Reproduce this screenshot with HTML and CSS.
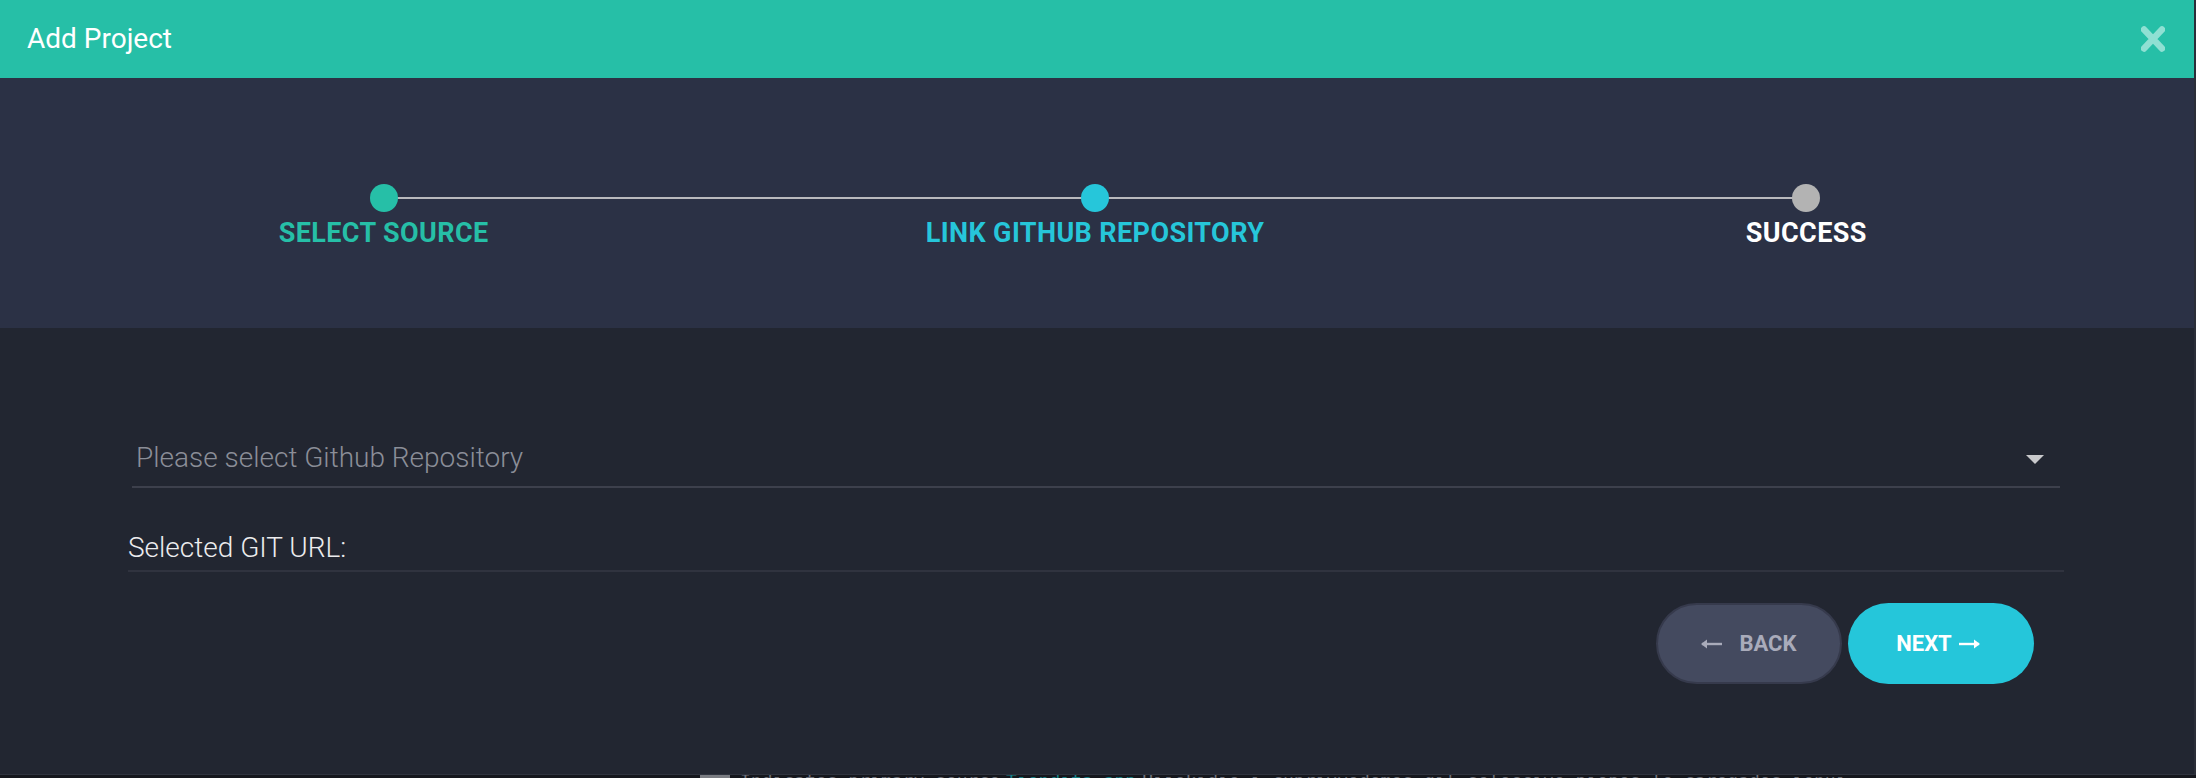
FILE: index.html
```html
<!DOCTYPE html>
<html lang="en">
<head>
<meta charset="utf-8">
<title>Add Project</title>
<link rel="stylesheet" href="styles.css">
</head>
<body>
<div class="modal">
  <header class="modal-header">
    <h1 class="modal-title">Add Project</h1>
    <button class="close-btn" aria-label="Close">
      <svg width="24" height="26" viewBox="0 0 24 26"><path d="M3 3.5 L21 22.5 M21 3.5 L3 22.5" stroke="#8fe0d3" stroke-width="6.5" stroke-linecap="round"/></svg>
    </button>
  </header>

  <section class="stepper">
    <div class="step step-done">
      <span class="step-dot"></span>
      <span class="step-label">SELECT SOURCE</span>
    </div>
    <div class="step step-active">
      <span class="step-dot"></span>
      <span class="step-label">LINK GITHUB REPOSITORY</span>
    </div>
    <div class="step step-todo">
      <span class="step-dot"></span>
      <span class="step-label">SUCCESS</span>
    </div>
  </section>

  <section class="modal-body">
    <div class="select-field">
      <span class="select-placeholder">Please select Github Repository</span>
      <span class="select-caret"></span>
    </div>
    <div class="url-field">Selected GIT URL:</div>
    <div class="actions">
      <button class="btn btn-back">
        <svg width="21" height="10" viewBox="0 0 21 10"><path d="M1 5 H21" stroke="#a9abba" stroke-width="2.4"/><path d="M0 5 L6 0.5 L6 9.5 Z" fill="#a9abba"/></svg>
        <span>BACK</span>
      </button>
      <button class="btn btn-next">
        <span>NEXT</span>
        <svg width="21" height="10" viewBox="0 0 21 10"><path d="M0 5 H20" stroke="#ffffff" stroke-width="2.4"/><path d="M21 5 L15 0.5 L15 9.5 Z" fill="#ffffff"/></svg>
      </button>
    </div>
  </section>
</div>
<div class="page-behind">
  <span class="pb-block"></span>
  <span class="pb-text">Indicates primary source</span>
  <span class="pb-teal">Tiendita-app</span>
  <span class="pb-text">Hijokidie i cuprivvodemos gil seleccive piopos le caregados ienui</span>
</div>
</body>
</html>
```

FILE: styles.css
```css
* {
  box-sizing: border-box;
}

html, body {
  margin: 0;
  padding: 0;
}

body {
  width: 2196px;
  height: 778px;
  overflow: hidden;
  background: #15171d;
  font-family: Roboto, "Noto Sans", "Liberation Sans", sans-serif;
}

.modal {
  width: 2196px;
  height: 775px;
  border-right: 2px solid #2b2e38;
  border-bottom: 1px solid #2f333e;
  display: flex;
  flex-direction: column;
  background: #222631;
}

.modal-header {
  height: 78px;
  flex: none;
  background: #26bfa7;
  display: flex;
  align-items: center;
  justify-content: space-between;
  padding: 0 29px 0 27px;
}

.modal-title {
  margin: 0;
  color: #ffffff;
  font-size: 28px;
  font-weight: 400;
  line-height: 1;
}

.close-btn {
  background: none;
  border: 0;
  padding: 0;
  width: 24px;
  height: 26px;
  display: flex;
  margin-top: 0;
}

/* stepper */
.stepper {
  height: 250px;
  flex: none;
  background: #2b3145;
  display: flex;
  padding: 106px 32px 0 28px;
}

.step {
  flex: 1;
  display: flex;
  flex-direction: column;
  align-items: center;
  position: relative;
}

.step + .step::before {
  content: "";
  position: absolute;
  top: 13px;
  left: -50%;
  right: 50%;
  height: 2px;
  background: #b9b9bd;
}

.step-dot {
  width: 28px;
  height: 28px;
  border-radius: 50%;
  position: relative;
  z-index: 1;
}

.step-label {
  margin-top: 6px;
  font-size: 27px;
  line-height: 30px;
  font-weight: 700;
  letter-spacing: 0.4px;
}

.step-done .step-dot { background: #26bfa7; }
.step-done .step-label { color: #26bfa7; }
.step-active .step-dot { background: #26c6da; }
.step-active .step-label { color: #26c6da; }
.step-todo .step-dot { background: #b3b3b3; }
.step-todo .step-label { color: #ffffff; }

/* body */
.modal-body {
  flex: 1;
  padding: 110px 130px 0 128px;
  display: flex;
  flex-direction: column;
}

.select-field {
  margin: 0 4px;
  display: flex;
  align-items: center;
  justify-content: space-between;
  padding: 0 16px 8px 4px;
  border-bottom: 2px solid #3d404c;
}

.select-placeholder {
  font-size: 28px;
  font-weight: 300;
  line-height: 40px;
  color: #8b8e98;
}

.select-caret {
  width: 0;
  height: 0;
  border-left: 9px solid transparent;
  border-right: 9px solid transparent;
  border-top: 9.5px solid #c9c9cc;
  margin-top: 3px;
}

.url-field {
  margin-top: 40px;
  font-size: 28px;
  font-weight: 300;
  line-height: 40px;
  color: #ececee;
  padding-bottom: 2px;
  border-bottom: 2px solid #30333f;
}

.actions {
  display: flex;
  justify-content: flex-end;
  gap: 6px;
  margin-top: 31px;
  padding-right: 30px;
}

.btn {
  height: 81px;
  width: 186px;
  border-radius: 41px;
  display: flex;
  align-items: center;
  justify-content: center;
  font-family: Roboto, "Noto Sans", "Liberation Sans", sans-serif;
  font-size: 22px;
  font-weight: 700;
  cursor: pointer;
}

.btn-back {
  width: 186px;
  background: #444a5f;
  border: 2px solid #363a4c;
  color: #a9abba;
  gap: 17px;
}

.btn-next {
  background: #25c6da;
  border: 0;
  color: #ffffff;
  gap: 7px;
  padding-right: 12px;
}

/* page visible behind the modal */
.page-behind {
  height: 3px;
  overflow: hidden;
  display: flex;
  align-items: flex-start;
  padding-left: 700px;
  font-family: "DejaVu Sans Mono", monospace;
  font-size: 18px;
  line-height: 18px;
  white-space: nowrap;
}

.page-behind span {
  margin-top: -3px;
}

.pb-block {
  width: 30px;
  height: 20px;
  background: #7a7c82;
  margin-right: 10px;
}

.pb-text {
  color: #6e7079;
}

.pb-teal {
  color: #177f86;
  margin: 0 6px;
}
```
